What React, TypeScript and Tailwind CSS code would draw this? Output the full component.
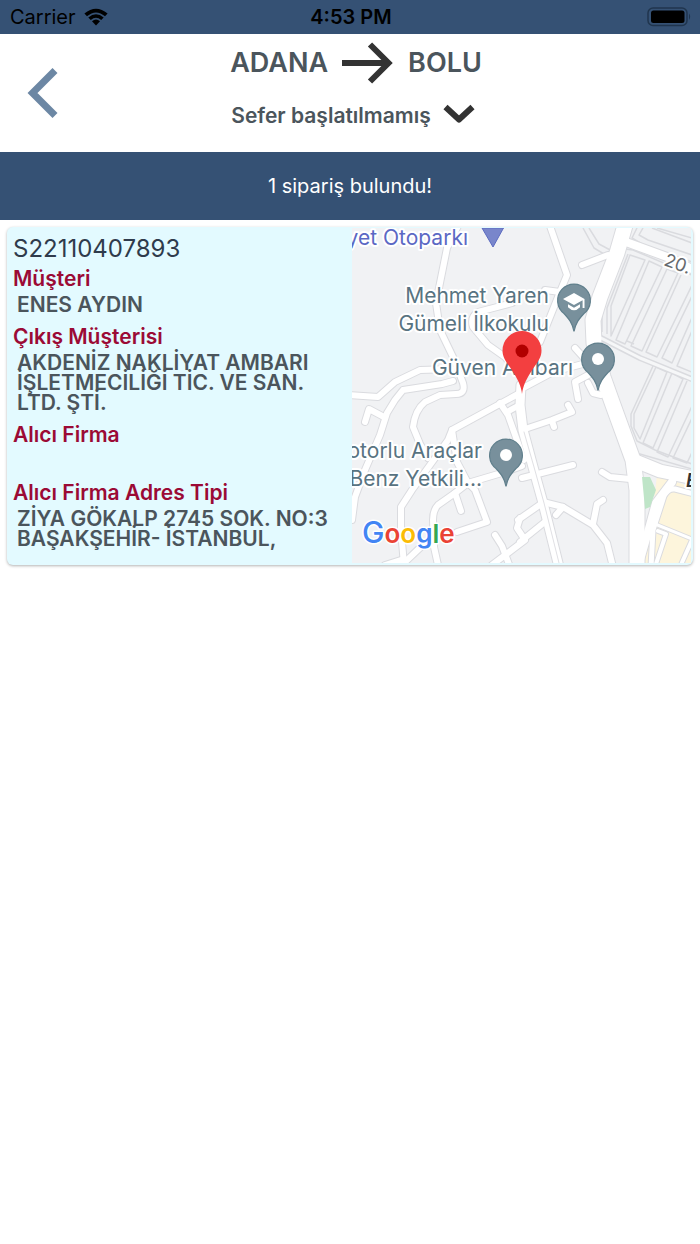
import React from "react";

type OrderField = { label: string; value: string };

const order: { code: string; fields: OrderField[] } = {
  code: "S22110407893",
  fields: [
    { label: "Müşteri", value: "ENES AYDIN" },
    { label: "Çıkış Müşterisi", value: "AKDENİZ NAKLİYAT AMBARI İŞLETMECİLİĞİ TİC. VE SAN. LTD. ŞTİ." },
    { label: "Alıcı Firma", value: "" },
    { label: "Alıcı Firma Adres Tipi", value: "ZİYA GÖKALP 2745 SOK. NO:3 BAŞAKŞEHİR- İSTANBUL," },
  ],
};

const streets = [
  "M458 226L447 248L440 283L436 303L440 330L453 357L463 383Q466 394 456 394L440 395L425 402Q415 410 413 427L420 444L428 458",
  "M350 395L378 397L395 382L420 370L452 369",
  "M453 381L442 384L403 390L395 400L387 413L380 435L365 470L355 497L352 520",
  "M365 422L369 409L384 417",
  "M512 303L478 312Q470 317 473 327L488 345L505 357L520 375",
  "M520 393L452 430L448 440L412 490L401 507V530L404 565",
  "M452 430L457 462L468 483L475 490L487 522L457 532",
  "M522 466L505 472L468 483L455 493L438 505Q433 510 433 520L434 547L438 565",
  "M455 493L461 511",
  "M425 543L404 563",
  "M385 565L404 559",
  "M500 403L508 415L524 460",
  "M507 412L516 407",
  "M522 430L552 420L572 412L568 405",
  "M552 421L554 427",
  "M522 478L573 465",
  "M543 502L563 507L593 525L607 543L613 567",
  "M593 524L597 504L603 500",
  "M563 507L556 515",
  "M518 520L541 504",
  "M520 542L546 521",
  "M520 518L517 528L525 540L492 565",
  "M495 535L502 546L510 567",
  "M602 472L610 477L630 479",
  "M550 226L567 275L560 292L540 342",
  "M560 292L545 290",
  "M582 265L608 255",
  "M523 388L553 372L590 362",
  "M575 348L584 358",
  "M578 399L575 382L590 374",
  "M588 383L593 393L601 395",
];

const parkingBlocks = [
  "M611 336V306L630 255L645 260Z",
  "M649 261L616 340L625 344L662 267Z",
  "M667 269L631 346L642 351L678 273Z",
  "M681 275L646 352L657 357L694 281",
  "M694 292L662 358L672 363L694 313",
  "M694 326L677 366L694 373",
  "M627 341L634 344",
  "M656 367L634 414V428L640 439L667 372Z",
  "M672 373L643 443L653 448L683 379Z",
  "M687 381L657 452L668 457L694 402",
  "M694 414L673 458L687 463L694 448",
];

function WifiIcon() {
  return (
    <svg viewBox="0 0 24 18" className="h-[18px] w-6" aria-hidden="true">
      <path d="M0.400 5.600Q12 -4 23.600 5.600L21 8.200Q12 0.600 3 8.200Z" />
      <path d="M4.300 9.500Q12 3 19.700 9.500L17.200 12Q12 7.600 6.800 12Z" />
      <path d="M8 13.200Q12 9.800 16 13.200L12 17.400Z" />
    </svg>
  );
}

function BatteryIcon() {
  return (
    <svg viewBox="0 0 45 20" className="h-5 w-[45px]" aria-hidden="true">
      <rect x="1" y="1" width="39" height="17.5" rx="5" fill="none" stroke="#20354e" strokeWidth="1.5" />
      <rect x="4" y="3.5" width="33.5" height="12.5" rx="2.5" />
      <path d="M42 6.5Q44.4 9.7 42 13Z" fill="#20354e" />
    </svg>
  );
}

function Poi({ x, y, school = false }: { x: number; y: number; school?: boolean }) {
  return (
    <g transform={`translate(${x} ${y})`}>
      <path
        d="M0 31.5C-1.5 23 -5 19 -10 13.5A16.4 16.4 0 1 1 10 13.5C5 19 1.5 23 0 31.5Z"
        fill="#78909c"
        stroke="#607f8c"
        strokeWidth="1.2"
      />
      {school ? (
        <g fill="#fff">
          <path d="M0 -7L-11 -1L0 5L8.6 0.3V8H10.500V-1Z" />
          <path d="M-6 4.200V7.200Q0 13.200 6 7.200V4.200L0 7.800Z" />
        </g>
      ) : (
        <circle r="6" fill="#fff" />
      )}
    </g>
  );
}

function OrderMap() {
  return (
    <svg
      viewBox="352 228 339 335"
      preserveAspectRatio="xMidYMid slice"
      className="h-full w-full"
      role="img"
      aria-label="Harita"
    >
      <rect x="352" y="228" width="339" height="335" fill="#f1f2f4" />

      <g fill="none" stroke="#dadbdf" strokeWidth="1.5" strokeLinejoin="round">
        <path d="M583 228L594 248L609 257" />
        <path d="M589 228L599 244L612 251" />
        <path d="M637 228L632 238L642 244L692 262" />
        <path d="M643 228L639 235L648 240L692 255" />
        <path d="M652 228L692 243" />
        <path d="M657 228L692 238" />
        <path d="M625 249L633 250L692 275" />
        <path d="M625 249L602 308V332" />
        <path d="M628 254L607 308V334" />
        <path d="M653 366L631 414V426L637 441L655 450L692 464" />
        <path d="M633 452L692 469" />
        {parkingBlocks.map((d) => (
          <path key={d} d={d} />
        ))}
      </g>

      <path d="M657 475L691 487V563H645V545L652 520Z" fill="#fdf5dc" />

      <g fill="none" strokeLinejoin="round" strokeLinecap="round">
        <g stroke="#dadbdf">
          <g strokeWidth="8">
            {streets.map((d) => (
              <path key={d} d={d} />
            ))}
            <path d="M599 337L640 358L694 380" strokeWidth="6" />
            <path d="M626 242L667 257L694 270" strokeWidth="10" />
            <path d="M694 494L675 489Q668 488 664 496L653 530L651 567" strokeWidth="7" />
            <path d="M655 524L692 539" strokeWidth="5" />
            <path d="M658 531L666 534L655 567M692 540L680 567" strokeWidth="6" />
          </g>
          <path d="M521 385L520 405L523 430L533 467L543 503L559 567" strokeWidth="11" />
          <path d="M626 222L617 253L600 297L593 320L594 343L603 377L613 405L633 460L637 490V570" strokeWidth="17" />
          <path d="M633 460L660 471L694 478" strokeWidth="15" />
          <path d="M672 482L656 503L650 525L640 560" strokeWidth="10" />
        </g>
        <g stroke="#fff">
          <g strokeWidth="6">
            {streets.map((d) => (
              <path key={d} d={d} />
            ))}
            <path d="M626 242L667 257L694 270" strokeWidth="8" />
            <path d="M694 494L675 489Q668 488 664 496L653 530L651 567" strokeWidth="5" />
            <path d="M655 524L692 539" strokeWidth="3" />
            <path d="M658 531L666 534L655 567M692 540L680 567" strokeWidth="4" />
          </g>
          <path d="M599 337L640 358L694 380" stroke="#f6f7f8" strokeWidth="3" />
          <path d="M521 385L520 405L523 430L533 467L543 503L559 567" strokeWidth="9" />
          <path d="M626 222L617 253L600 297L593 320L594 343L603 377L613 405L633 460L637 490V570" strokeWidth="15" />
          <path d="M633 460L660 471L694 478" strokeWidth="13" />
          <path d="M672 482L656 503L650 525L640 560" strokeWidth="8" />
        </g>
        <path d="M524 432L534 467L544 503L559 563" stroke="#e0e0e4" strokeWidth="1" />
      </g>
      <path d="M642 477H650L656 490L650 507L645 509Z" fill="#bfe5c8" />

      <g
        fontFamily="Inter, 'Liberation Sans', sans-serif"
        fontSize="21"
        fill="#587381"
        stroke="#fff"
        strokeWidth="4"
        strokeLinejoin="round"
        paintOrder="stroke"
        textAnchor="end"
      >
        <text x="468" y="245" fill="#5b68c4">yet Otoparkı</text>
        <text x="549" y="303">Mehmet Yaren</text>
        <text x="549" y="331">Gümeli İlkokulu</text>
        <text x="573" y="375">Güven Ambarı</text>
        <text x="482" y="458">otorlu Araçlar</text>
        <text x="482" y="486">Benz Yetkili...</text>
        <text x="663" y="265" fontSize="18" fill="#666a6e" textAnchor="start" transform="rotate(20 663 265)">20.</text>
        <text x="686" y="487" fontSize="19" fontStyle="italic" fontWeight="600" fill="#333" textAnchor="start">E</text>
      </g>

      <path d="M482 228H503.500L493 247Z" fill="#7986cb" stroke="#5c6bc0" />
      <Poi x={574} y={300} school />
      <Poi x={598} y={359} />
      <Poi x={506} y={455} />

      <path d="M522 394C521 386 518.500 380 510.500 368C505.500 361 502.500 357 502.500 350.500A19.500 19.500 0 0 1 541.500 350.500C541.500 357 538.500 361 533.500 368C525.500 380 523 386 522 394Z" fill="#f33f40" />
      <circle cx="522" cy="351" r="6.500" fill="#b10000" />

      <text
        x="362"
        y="543"
        fontFamily="Inter, 'Liberation Sans', sans-serif"
        fontSize="26"
        fontWeight="600"
        stroke="#fff"
        strokeWidth="3"
        strokeLinejoin="round"
        paintOrder="stroke"
      >
        <tspan fill="#4285f4" fontSize="30" fontWeight="500">G</tspan>
        <tspan fill="#ea4335">o</tspan>
        <tspan fill="#fbbc05">o</tspan>
        <tspan fill="#4285f4">g</tspan>
        <tspan fill="#34a853">l</tspan>
        <tspan fill="#ea4335">e</tspan>
      </text>
    </svg>
  );
}

export default function App() {
  return (
    <div className="min-h-screen bg-white font-['Inter','Liberation_Sans',sans-serif] text-[#4b555c]">
      <div className="grid h-[34px] grid-cols-3 items-center bg-[#355174] pr-2 pl-[10px] text-black">
        <div className="flex items-center gap-2 text-[20px] leading-6">
          <span>Carrier</span>
          <WifiIcon />
        </div>
        <time className="text-center text-[20px] leading-6 font-semibold">4:53 PM</time>
        <div className="flex justify-end">
          <BatteryIcon />
        </div>
      </div>

      <header className="grid h-[118px] grid-cols-[84px_1fr_72px] items-center">
        <button type="button" aria-label="Geri" className="flex justify-center">
          <svg viewBox="0 0 32 52" className="h-[52px] w-8" fill="none" stroke="#6c87a4" strokeWidth="7" aria-hidden="true">
            <path d="M29 3.500L6.500 26L29 48.500" />
          </svg>
        </button>
        <div className="flex flex-col items-center gap-3 pb-2">
          <h1 className="flex items-center gap-[14px] text-[27px] leading-10 font-semibold">
            <span>ADANA</span>
            <svg viewBox="0 0 52 42" className="h-[42px] w-[52px]" fill="none" stroke="#333" strokeWidth="6" role="img" aria-label="varış">
              <path d="M0 21H46" />
              <path d="M28 2.500L46.500 21L28 39.500" />
            </svg>
            <span>BOLU</span>
          </h1>
          <button type="button" className="flex items-center gap-3 pr-1.5 text-[21px] leading-10 font-semibold">
            <span>Sefer başlatılmamış</span>
            <svg viewBox="0 0 32 24" className="h-6 w-8" fill="none" stroke="#333" strokeWidth="6" strokeLinejoin="round" aria-hidden="true">
              <path d="M2.500 3L16 15.500L29.500 3" />
            </svg>
          </button>
        </div>
      </header>

      <p className="flex h-[68px] items-center justify-center bg-[#355174] text-[20px] leading-6 text-white">
        1 sipariş bulundu!
      </p>

      <main className="p-[7px]">
        <article className="grid grid-cols-2 overflow-hidden rounded-md bg-[#e3faff] shadow-[0_1px_3px_rgba(0,0,0,0.3)]">
          <div className="px-[6px] pt-2 pb-4">
            <h2 className="text-[24px] leading-7 text-[#2f3b4c]">{order.code}</h2>
            <dl className="mt-1 flex flex-col gap-[10px] text-[21px] font-semibold">
              {order.fields.map((field) => (
                <div key={field.label} className="flex flex-col gap-1">
                  <dt className="leading-6 text-[#9b0a35]">{field.label}</dt>
                  <dd className="min-h-5 pl-1 leading-5">{field.value}</dd>
                </div>
              ))}
            </dl>
          </div>
          <div className="relative mt-px mr-0.5 mb-0.5 ml-0.5">
            <div className="absolute inset-0">
              <OrderMap />
            </div>
          </div>
        </article>
      </main>
    </div>
  );
}
